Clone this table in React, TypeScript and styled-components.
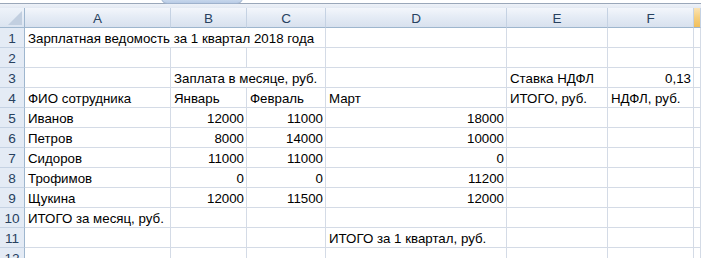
import React from "react";
import styled, { createGlobalStyle } from "styled-components";

const GlobalStyle = createGlobalStyle`
  html, body {
    margin: 0;
    padding: 0;
    background: #ffffff;
  }
  body {
    width: 701px;
    height: 258px;
    overflow: hidden;
    font-family: "Liberation Sans", Arial, sans-serif;
  }
`;

const Sheet = styled.div`
  width: 701px;
  height: 258px;
  overflow: hidden;
  background: #ffffff;
  display: flex;
  flex-direction: column;
`;

const TopStrip = styled.div`
  position: relative;
  height: 8px;
  flex: none;
  background: #ffffff;
  display: flex;
  flex-direction: column;
`;

const StripSpace = styled.div`
  height: 3px;
`;

const StripLine = styled.div`
  height: 1px;
  background: #9aa7b9;
`;

const StripBase = styled.div`
  flex: 1;
  background: linear-gradient(#eef2f8, #e3e9f2);
`;

/* scroll thumb peeking in above the column headers */
const ScrollThumb = styled.div`
  position: absolute;
  left: 161px;
  top: -4px;
  width: 82px;
  height: 8px;
  border: 1px solid #9fb2cc;
  border-radius: 0 0 6px 6px;
  background: linear-gradient(#d3e0f1, #b9cce6);
  box-sizing: border-box;
`;

const Grid = styled.div`
  display: grid;
  grid-template-columns: 25px 146px 76px 79px 181px 101px 86px 1fr;
  grid-auto-rows: 20px;
`;

const Corner = styled.div`
  position: relative;
  background: linear-gradient(#eef3fa, #dbe4f0);
  border-right: 1px solid #9eb6ce;
  border-bottom: 1px solid #9eb6ce;
  box-sizing: border-box;
  &::after {
    content: "";
    position: absolute;
    right: 2px;
    bottom: 2px;
    width: 0;
    height: 0;
    border-left: 14px solid transparent;
    border-bottom: 14px solid #c2cfe0;
  }
`;

const ColHead = styled.div<{ $active?: boolean }>`
  display: flex;
  align-items: center;
  justify-content: center;
  font-size: 13.5px;
  color: #27415f;
  background: ${(p) =>
    p.$active
      ? "linear-gradient(#fbe3b4, #f6cf7e 50%, #f1bf5c)"
      : "linear-gradient(#f3f6fb, #e4ebf5 50%, #d8e1ee)"};
  border-right: 1px solid #c5d2e3;
  border-bottom: 1px solid #9eb6ce;
  box-sizing: border-box;
  padding-top: 1px;
`;

const RowHead = styled.div`
  display: flex;
  align-items: flex-end;
  justify-content: center;
  padding-bottom: 1px;
  font-size: 13.6px;
  color: #27415f;
  background: #e4ebf5;
  border-right: 1px solid #9eb6ce;
  border-bottom: 1px solid #c5d2e3;
  box-sizing: border-box;
`;

const Cell = styled.div<{ $num?: boolean; $span?: number }>`
  grid-column: ${(p) => (p.$span ? `span ${p.$span}` : "auto")};
  display: flex;
  align-items: flex-end;
  justify-content: ${(p) => (p.$num ? "flex-end" : "flex-start")};
  padding: 0 2px 1px 3px;
  font-size: 13.3px;
  color: #000000;
  white-space: nowrap;
  border-right: 1px solid #d4dbe6;
  border-bottom: 1px solid #d4dbe6;
  box-sizing: border-box;
`;

type CellDef = { text?: string; num?: boolean; span?: number };

const columns = ["A", "B", "C", "D", "E", "F"];

const rows: CellDef[][] = [
  [{ text: "Зарплатная ведомость за 1 квартал 2018 года", span: 3 }, {}, {}, {}, {}],
  [{}, {}, {}, {}, {}, {}, {}],
  [{}, { text: "Заплата в месяце, руб.", span: 2 }, {}, { text: "Ставка НДФЛ" }, { text: "0,13", num: true }, {}],
  [
    { text: "ФИО сотрудника" },
    { text: "Январь" },
    { text: "Февраль" },
    { text: "Март" },
    { text: "ИТОГО, руб." },
    { text: "НДФЛ, руб." },
    {},
  ],
  [{ text: "Иванов" }, { text: "12000", num: true }, { text: "11000", num: true }, { text: "18000", num: true }, {}, {}, {}],
  [{ text: "Петров" }, { text: "8000", num: true }, { text: "14000", num: true }, { text: "10000", num: true }, {}, {}, {}],
  [{ text: "Сидоров" }, { text: "11000", num: true }, { text: "11000", num: true }, { text: "0", num: true }, {}, {}, {}],
  [{ text: "Трофимов" }, { text: "0", num: true }, { text: "0", num: true }, { text: "11200", num: true }, {}, {}, {}],
  [{ text: "Щукина" }, { text: "12000", num: true }, { text: "11500", num: true }, { text: "12000", num: true }, {}, {}, {}],
  [{ text: "ИТОГО за месяц, руб." }, {}, {}, {}, {}, {}, {}],
  [{}, {}, {}, { text: "ИТОГО за 1 квартал, руб." }, {}, {}, {}],
  [{}, {}, {}, {}, {}, {}, {}],
];

export default function App() {
  return (
    <Sheet>
      <GlobalStyle />
      <TopStrip>
        <StripSpace />
        <StripLine />
        <StripBase />
        <ScrollThumb />
      </TopStrip>
      <Grid>
        <Corner />
        {columns.map((c) => (
          <ColHead key={c}>{c}</ColHead>
        ))}
        <ColHead $active />
        {rows.map((row, r) => (
          <React.Fragment key={r}>
            <RowHead>{r + 1}</RowHead>
            {row.map((cell, i) => (
              <Cell key={i} $num={cell.num} $span={cell.span}>
                {cell.text}
              </Cell>
            ))}
          </React.Fragment>
        ))}
      </Grid>
    </Sheet>
  );
}
